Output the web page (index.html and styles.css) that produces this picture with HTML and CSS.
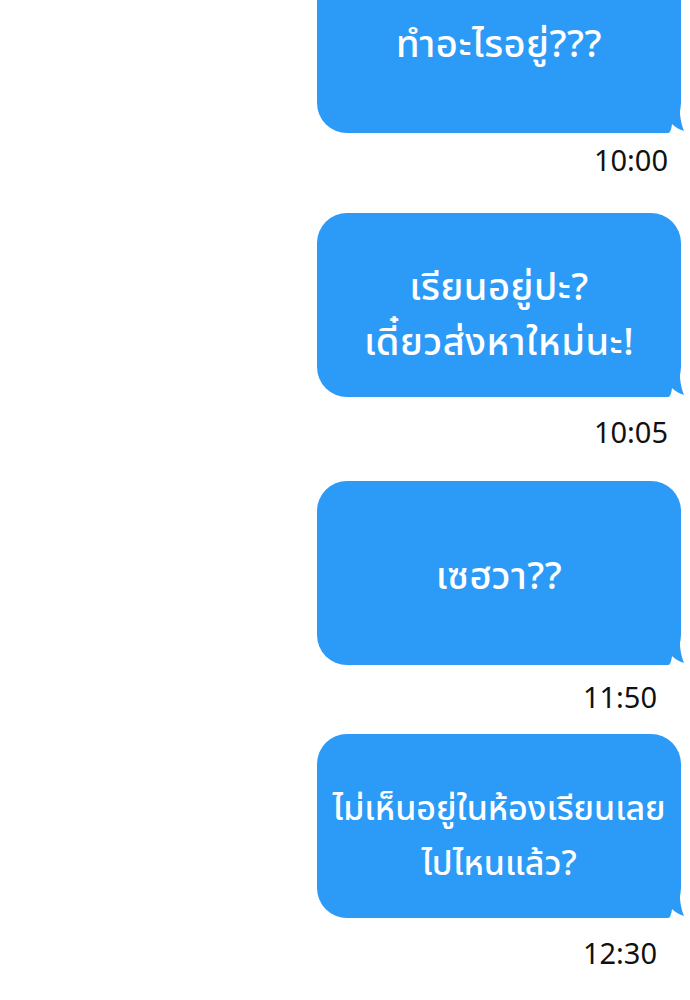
FILE: index.html
```html
<!DOCTYPE html>
<html lang="th">
<head>
  <meta charset="UTF-8">
  <meta name="viewport" content="width=device-width, initial-scale=1.0">
  <title>Chat</title>
  <link rel="stylesheet" href="styles.css">
</head>
<body>
  <div class="thread">
    <div class="bubble">
      <p>ทำอะไรอยู่???</p>
      <svg class="tail" width="34" height="38" viewBox="0 0 34 38"><path d="M0,37 L18,37 Q21,37 22,28 Q27,33 34,35 Q31,28 30,18 L30,0 L0,0 Z"/></svg>
    </div>
    <div class="time">10:00</div>

    <div class="bubble two">
      <p>เรียนอยู่ปะ?<br>เดี๋ยวส่งหาใหม่นะ!</p>
      <svg class="tail" width="34" height="38" viewBox="0 0 34 38"><path d="M0,37 L18,37 Q21,37 22,28 Q27,33 34,35 Q31,28 30,18 L30,0 L0,0 Z"/></svg>
    </div>
    <div class="time">10:05</div>

    <div class="bubble">
      <p>เซฮวา??</p>
      <svg class="tail" width="34" height="38" viewBox="0 0 34 38"><path d="M0,37 L18,37 Q21,37 22,28 Q27,33 34,35 Q31,28 30,18 L30,0 L0,0 Z"/></svg>
    </div>
    <div class="time">11:50</div>

    <div class="bubble two small">
      <p>ไม่เห็นอยู่ในห้องเรียนเลย<br>ไปไหนแล้ว?</p>
      <svg class="tail" width="34" height="38" viewBox="0 0 34 38"><path d="M0,37 L18,37 Q21,37 22,28 Q27,33 34,35 Q31,28 30,18 L30,0 L0,0 Z"/></svg>
    </div>
    <div class="time">12:30</div>
  </div>
</body>
</html>
```

FILE: styles.css
```css
body {
  margin: 0;
  background: #fff;
  font-family: "Noto Sans Thai", "Noto Sans", sans-serif;
  overflow: hidden;
}
.thread {
  display: flex;
  flex-direction: column;
  align-items: flex-end;
  padding-right: 9px;
}
.bubble {
  position: relative;
  box-sizing: border-box;
  width: 364px;
  height: 184px;
  padding-top: 8px;
  background: #2c9bf8;
  border-radius: 30px;
  display: flex;
  align-items: center;
  justify-content: center;
}
.bubble.two {
  padding-top: 22px;
}
.bubble p {
  margin: 0;
  color: #fff;
  font-size: 38px;
  font-weight: 500;
  line-height: 55px;
  letter-spacing: 0.5px;
  text-align: center;
}
.bubble.small p {
  font-size: 34px;
  letter-spacing: 0;
}
.tail {
  position: absolute;
  right: -3px;
  bottom: -1px;
  fill: #2c9bf8;
}
.time {
  font-family: "Noto Sans", sans-serif;
  font-size: 29px;
  line-height: 30px;
  color: #111;
}
.bubble:nth-child(1) { margin-top: -51px; }
.time:nth-child(2) { margin: 12px 13px 38px 0; }
.time:nth-child(4) { margin: 20px 13px 34px 0; }
.time:nth-child(6) { margin: 17px 24px 22px 0; }
.time:nth-child(8) { margin: 20px 24px 0 0; }
```
